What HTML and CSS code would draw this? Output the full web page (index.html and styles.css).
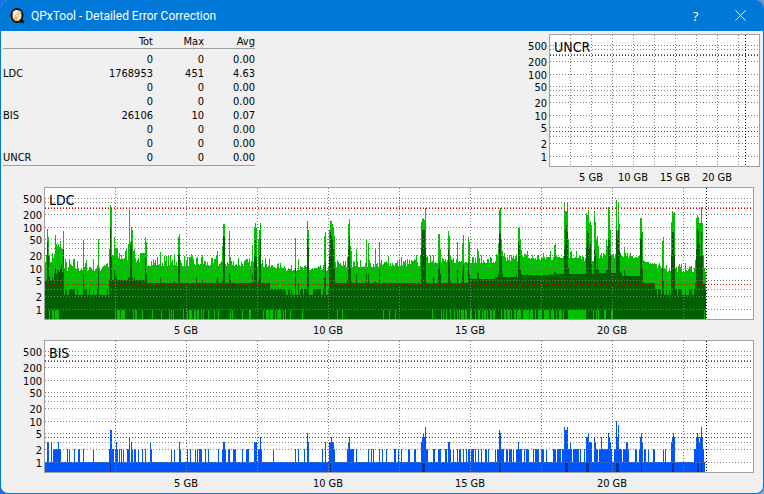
FILE: index.html
```
<!DOCTYPE html>
<html lang="en">
<head>
    <meta charset="UTF-8">
    <meta name="viewport" content="width=device-width, initial-scale=1.0">
    <title>QPxTool - Detailed Error Correction</title>
    <link rel="stylesheet" href="styles.css">
</head>
<body>
    <div class="window">
        <header class="titlebar">
            <svg class="app-icon" viewBox="0 0 16 16" aria-hidden="true">
                <path d="M9 11l2-.5 4.500 2.500-1 2.500-4.500-1.500z" fill="#111"/>
                <ellipse cx="8" cy="7.500" rx="5.500" ry="6.500" fill="#ffe9c4" stroke="#111" stroke-width="2"/>
                <path d="M8 7.500L3.500 5Q4.500 2 8 2z" fill="#fff8ea"/>
                <path d="M8 7.500L3.500 10Q5 13 8 13z" fill="#ffb650"/>
                <path d="M8 7.500L12.500 5Q12 3 10 2.200z" fill="#ffc878"/>
                <circle cx="8" cy="7.500" r="1.500" fill="#fff" stroke="#c99a60" stroke-width=".6"/>
            </svg>
            <h1 class="title">QPxTool - Detailed Error Correction</h1>
            <button class="title-btn" type="button" aria-label="Help">?</button>
            <button class="title-btn" type="button" aria-label="Close">
                <svg class="close-icon" viewBox="0 0 11 11" aria-hidden="true"><path d="M.5 .5l10 10M10.500 .5l-10 10" stroke="#fff" fill="none"/></svg>
            </button>
        </header>

        <main class="content">
            <div class="top-row">
                <table class="stats">
                    <thead>
                        <tr><th></th><th>Tot</th><th>Max</th><th>Avg</th></tr>
                    </thead>
                    <tbody>
                        <tr><th></th><td>0</td><td>0</td><td>0.00</td></tr>
                        <tr><th>LDC</th><td>1768953</td><td>451</td><td>4.63</td></tr>
                        <tr><th></th><td>0</td><td>0</td><td>0.00</td></tr>
                        <tr><th></th><td>0</td><td>0</td><td>0.00</td></tr>
                        <tr><th>BIS</th><td>26106</td><td>10</td><td>0.07</td></tr>
                        <tr><th></th><td>0</td><td>0</td><td>0.00</td></tr>
                        <tr><th></th><td>0</td><td>0</td><td>0.00</td></tr>
                        <tr><th>UNCR</th><td>0</td><td>0</td><td>0.00</td></tr>
                    </tbody>
                </table>
                <svg class="chart chart-small" id="uncr"></svg>
            </div>
            <svg class="chart" id="ldc"></svg>
            <svg class="chart" id="bis"></svg>
        </main>
    </div>

    <script src="charts.js"></script>
</body>
</html>
```
FILE: styles.css
```
* {
    margin: 0;
    padding: 0;
    box-sizing: border-box;
}

body {
    min-height: 100vh;
    display: flex;
    background: linear-gradient(100deg, #1f63e8, #3f78c0 60%, #7fa6cc);
    font-family: "DejaVu Sans Condensed", "DejaVu Sans", sans-serif;
    font-size: 11px;
    color: #000;
}

.window {
    flex: 1;
    min-width: 0;
    display: flex;
    flex-direction: column;
    background: #f0f0f0;
    border: 1px solid #0078d7;
    border-top: 0;
    border-radius: 8px;
    overflow: hidden;
}

.titlebar {
    display: flex;
    align-items: center;
    height: 31px;
    padding-left: 8px;
    background: #0078d7;
    color: #fff;
}

.app-icon {
    width: 16px;
    height: 16px;
    margin-right: 6px;
}

.title {
    flex: 1;
    font-family: Roboto, "Open Sans", sans-serif;
    font-size: 12px;
    font-weight: 400;
}

.title-btn {
    width: 45px;
    height: 31px;
    border: 0;
    background: none;
    color: #fff;
    font-family: "Open Sans", "Noto Sans", sans-serif;
    font-size: 13px;
}

.close-icon {
    width: 11px;
    height: 11px;
    vertical-align: middle;
    margin-bottom: 3px;
}

.content {
    flex: 1;
    display: flex;
    flex-direction: column;
}

.top-row {
    display: flex;
    justify-content: space-between;
    align-items: flex-start;
    padding-top: 3px;
}

/* error totals */
.stats {
    width: 252px;
    margin-left: 2px;
    border-collapse: collapse;
    border-bottom: 1px solid #a0a0a0;
    line-height: 14px;
}

.stats th,
.stats td {
    font-weight: 400;
    text-align: right;
    width: 51px;
}

.stats th:first-child {
    width: 80px;
    text-align: left;
}

.stats td:nth-child(2) {
    width: 70px;
}

.stats tr {
    height: 14px;
}

.stats thead th {
    padding-top: 2px;
    line-height: 12px;
    border-bottom: 1px solid #a0a0a0;
}

.stats tbody tr:first-child > * {
    padding-top: 4px;
}

/* charts */
.chart {
    display: block;
    width: 100%;
    height: 153px;
}

.chart-small {
    width: 33%;
    min-width: 240px;
}

.frame {
    fill: #fff;
    stroke: #a0a0a0;
}

.grid {
    stroke: #808080;
    stroke-dasharray: 1 2;
}

.limit {
    stroke: #e00000;
    stroke-dasharray: 1 2;
}

.end {
    stroke: #000;
    stroke-dasharray: 1 2;
}

.frame,
.grid,
.limit,
.end,
.bars {
    shape-rendering: crispEdges;
}

.axis {
    fill: #000;
}

.axis-y {
    text-anchor: end;
}

.axis-x {
    text-anchor: middle;
}

.name {
    font-size: 14px;
}

.ldc-max {
    fill: #00c000;
}

.ldc-avg {
    fill: #006000;
}

.bis-max {
    fill: #0055ff;
}

.bis-avg {
    fill: #003090;
}
```
FILE: charts.js
```
const SVG = 'http://www.w3.org/2000/svg';
const CAPACITY = 24.95;   // GB across the plot
const DISC_END = 23.3;    // GB
const SAMPLES = 708;
const PLOT_H = 131;

// LDC background level: [from sample, max, spread, avg]
const ldcLevel = [
    [0, 20, 5, 5], [19, 11, 5, 2.9], [57, 13, 5, 2.9], [64, 20, 5, 5], [85, 17, 4, 5], [100, 14, 4, 4.2],
    [160, 13, 3, 4.2], [216, 12, 3, 4.2], [225, 11, 2, 3.1], [241, 9.5, 2, 2.8],
    [290, 12, 3, 4.2], [340, 13, 3, 4.2], [381, 15, 3, 4.3],
    [424, 15, 3, 5.2], [450, 17, 3, 5.8], [477, 18, 3, 6.5], [508, 20, 3, 7.2],
    [531, 17, 3, 7.2], [552, 20, 3, 7.4], [577, 19, 2, 6.4], [598, 15, 2, 4.2], [604, 13, 2, 4.2],
    [610, 10.5, 2, 2.6], [622, 9.5, 3, 2.2], [650, 14, 2, 4.2]
];

// sample:max/avg
const ldcPeaks = `0:14/5 1:20/5 2:90/43 3:57/20 4:20/6 5:14/5 6:14/5 7:23/6 8:17/5 9:22/7 10:64/10
    11:38/7 12:33/9 13:38/9 14:32/8 15:46/10 16:30/12 17:29/8 18:78/28 38:47/7 53:50/9
    65:345/100 66:310/18 69:55/9 70:30/7 71:30/6 83:38/6 84:260/6 85:42/35 86:100/43 87:83/6 89:28/6
    100:57/17 101:42/7 115:24/6 129:22/5 133:57/22 134:66/20 151:17/6 157:20/5 171:20/5 172:25/6
    177:33/5 178:115/60 179:115/55 184:80/7 185:18/5 193:17/4 207:35/7 209:100/20 210:125/50
    211:95/18 213:50/5 214:85/20 215:125/50 220:17/4 250:53/10 253:16/4 262:135/50 263:83/30
    279:60/6 280:73/14 284:85/20 285:135/75 286:135/60 287:115/50 288:100/30 289:60/10
    302:18/5 303:115/30 304:150/60 305:33/10 306:25/5 311:29/7 321:47/7 323:40/7 330:28/5 334:42/9
    343:19/4 356:18/4 371:20/4 375:20/4 376:130/30 377:150/85 378:165/85 379:145/85 380:290/30
    385:20/4 388:20/6 393:65/10 394:67/14 395:28/7 403:80/28 404:60/14 405:20/5 412:42/9 417:38/7
    418:64/12 423:55/14 424:42/7 432:28/8 433:26/7 451:22/6 453:40/7 454:250/70 455:280/66
    456:50/20 457:25/7 471:22/7 473:95/42 474:95/35 475:50/9 476:27/7 482:25/7 505:25/7 509:36/8
    510:40/8 519:400/30 520:240/90 521:240/110 522:370/75 523:50/10 526:25/7 531:25/7
    541:210/30 542:195/80 543:260/70 544:120/30 545:140/40 546:110/12 549:240/30 550:130/20
    551:50/9 552:60/16 553:33/9 561:50/9 562:33/9 563:310/50 564:260/50 565:85/20
    571:440/80 572:85/50 573:370/85 574:115/25 575:23/8 579:32/9 580:23/7
    595:160/50 596:160/66 597:75/10 617:45/10 618:55/5 626:130/20 627:240/75 628:210/75
    629:230/20 651:160/30 652:190/95 653:175/80 654:125/40 655:125/20 656:310/75 657:120/20
    658:20/4 659:10/4 660:8/3`;

// areas where the average falls below one: start+length
const ldcGaps = `4+1 7+2 10+4 70+1 72+3 76+4 88+1 90+2 97+1 107+1 116+1 124+1 126+1 128+1 138+1 142+1
    144+3 149+2 152+2 156+1 158+1 163+1 169+1 173+1 185+1 187+1 197+1 204+2 218+1 221+3 225+3
    230+1 232+4 238+1 240+1 245+1 257+1 292+1 297+1 338+1 344+1 350+1 387+1 396+1 398+1 401+1 405+1
    409+1 412+1 414+1 416+3 420+2 425+2 430+1 433+2 437+1 439+2 442+1 445+2 448+2 456+1 459+2 462+3
    466+1 469+2 472+4 478+6 485+3 490+1 493+4 499+5 506+3 511+1 514+3 518+1 523+18
    548+1 551+1 553+1 559+2 566+2 659+1`;

const bisPeaks = `2-3:3 6:3 8-15:2 13:3 22:2 24:2 29:2 33-34:2 38:2 48:2 64:2 65-66:6 67-68:2 70:2 71:3
    72:2 74:2 76:2 78:2 82-83:2 84:4 86:3 87:2 89-90:2 93:2 97:2 100:2 105:3 106:2 126:2 129:2
    134:3 135:2 142:2 145:2 150:2 152:2 154-156:2 160:2 163:2 173:2 177:2
    178-179:3 180:2 183-184:2 188-190:2 197:2 201-203:2 209-211:3 213-214:2 215:4 216:2 228:2
    250:2 253:2 259:2 262:5 263:3 277:2 280:3 284-288:3 286:4 289:2 302-308:2 303:3 304:4 311:2
    323:2 326:2 328:2 334:2 337:2 341:2 349-350:2 353:2 356:2 363-364:2 369-370:2
    376:3 377:4 378:5 379:4 380:7 381-382:2 388-389:2 393-395:2 400-401:2 403-404:3 405:2 408:2
    412:2 414-415:2 418:2 421:2 423-424:2 426-428:2 430:2 433:2 436:2 440-441:2 443:2 450:2
    452-453:2 454:6 455:5 456-458:2 461-462:2 464-466:2 468:2 471-472:2 473:3 474-476:2 479:2
    481-483:2 488:2 490-493:2 496-498:2 501:2 508-510:2 512-515:2 517-518:2 519:7 520-521:6
    522:7 523-524:2 525:3 526:2 528-533:2 535:2 539:2 541-542:4 543:5 544-546:3 549:4 550:3
    551-552:2 554-555:2 556:4 557-562:2 563:5 564:4 565:3 566:2 569-570:2 571:10 572:4 573:8
    574-576:2 578-580:2 581-582:3 583:2 590-591:2 594:2 595:4 596:5 597:3 599-600:2 603:2
    608-609:2 618:2 620:2 626:3 627:4 628:5 629:4 649-650:2 651:4 652:5 653:4 654:3 655:4
    656:7 657:4 658:2`;

const bisAverage = '65+1 285+1 377+3 454+2 520+3 541+3 571+3 596+1 627+2 652+2 656+1';

function levelY(value) {
    return Math.floor(121.2 - 41 * Math.log10(value));
}

function parseRuns(text) {
    return text.trim().split(/\s+/).map(run => run.split('+').map(Number));
}

function buildLdc() {
    const max = [];
    const avg = [];
    let seed = 7;
    for (let i = 0; i <= 660; i++) {
        const level = ldcLevel.filter(l => l[0] <= i).pop();
        seed = (seed * 16807) % 2147483647;
        const r = seed / 2147483647;
        max[i] = level[1] * Math.pow(10, (r * r - 0.35) * level[2] * 0.07);
        avg[i] = level[3];
        // low areas alternate between two and three
        if (level[3] < 3) avg[i] = r > 0.55 ? 3.1 : 2.1;
    }
    ldcPeaks.trim().split(/\s+/).forEach(item => {
        const [index, values] = item.split(':');
        [max[index], avg[index]] = values.split('/').map(Number);
    });
    return { max, avg };
}

function buildBis() {
    const max = new Array(660).fill(1);
    bisPeaks.trim().split(/\s+/).forEach(item => {
        const [range, value] = item.split(':');
        const [from, to = from] = range.split('-').map(Number);
        max.fill(Number(value), from, to + 1);
    });
    return max;
}

function add(parent, tag, attrs, text) {
    const el = document.createElementNS(SVG, tag);
    for (const key in attrs) el.setAttribute(key, attrs[key]);
    if (text) el.textContent = text;
    parent.appendChild(el);
}

function barsPath(values, left, top, step) {
    return values.map((v, i) => {
        const y = top + levelY(v);
        const x = left + Math.round(i * step);
        const next = left + Math.round((i + 1) * step);
        return `M${x} ${y}H${next}V${top + PLOT_H}H${x}z`;
    }).join('');
}

function runsPath(runs, left, top, step) {
    return runs.map(([from, length]) => {
        const x = left + Math.round(from * step);
        const end = left + Math.round((from + length) * step);
        return `M${x} ${top + 122}H${end}V${top + PLOT_H}H${x}z`;
    }).join('');
}

function drawChart(id, name, left, right, top, drawBars) {
    const svg = document.getElementById(id);
    svg.replaceChildren();
    svg.setAttribute('role', 'img');
    svg.setAttribute('aria-label', name + ' errors by disc position');
    const width = Math.floor(svg.getBoundingClientRect().width) - left - right;
    const bottom = top + PLOT_H;
    const perGb = width / CAPACITY;

    add(svg, 'rect', { class: 'frame', x: left - 0.5, y: top - 0.5, width: width + 1, height: PLOT_H + 1 });
    if (drawBars) drawBars(svg, left, top, width / SAMPLES);

    [1, 2, 3, 4, 5, 10, 20, 30, 40, 50, 100, 200, 300, 400, 500].forEach(v => {
        const y = top + levelY(v) + 0.5;
        if (v !== 4) add(svg, 'path', { class: 'grid', d: `M${left} ${y}H${left + width}` });
        if (/^[125]/.test(v)) {
            add(svg, 'text', { class: 'axis axis-y', x: left - 3, y: Math.floor(y) + 5 }, String(v));
        }
    });
    for (let gb = 2.5; gb < CAPACITY; gb += 2.5) {
        const x = left + Math.floor(gb * perGb) + 0.5;
        add(svg, 'path', { class: 'grid', d: `M${x} ${top}V${bottom}` });
        if (gb % 5 === 0) {
            add(svg, 'text', { class: 'axis axis-x', x: Math.floor(x), y: bottom + 15 }, gb + ' GB');
        }
    }
    [4, 290].forEach(v => {
        const y = top + levelY(v) + 0.5;
        add(svg, 'path', { class: 'limit', d: `M${left} ${y}H${left + width}` });
    });
    const end = left + Math.floor(DISC_END * perGb) + 0.5;
    add(svg, 'path', { class: 'end', d: `M${end} ${top}V${bottom}` });
    add(svg, 'text', { class: 'name', x: left + 4, y: top + 17 }, name);
}

const ldc = buildLdc();
const bis = buildBis();

function drawAll() {
    drawChart('uncr', 'UNCR', 38, 4, 1, null);
    drawChart('ldc', 'LDC', 44, 10, 1, (svg, left, top, step) => {
        add(svg, 'path', { class: 'bars ldc-max', d: barsPath(ldc.max, left, top, step) });
        add(svg, 'path', { class: 'bars ldc-avg', d: barsPath(ldc.avg, left, top, step) });
        add(svg, 'path', { class: 'bars ldc-max', d: runsPath(parseRuns(ldcGaps), left, top, step) });
    });
    drawChart('bis', 'BIS', 44, 10, 1, (svg, left, top, step) => {
        add(svg, 'path', { class: 'bars bis-max', d: barsPath(bis, left, top, step) });
        add(svg, 'path', { class: 'bars bis-avg', d: runsPath(parseRuns(bisAverage), left, top, step) });
    });
}

drawAll();
window.addEventListener('resize', drawAll);
```
